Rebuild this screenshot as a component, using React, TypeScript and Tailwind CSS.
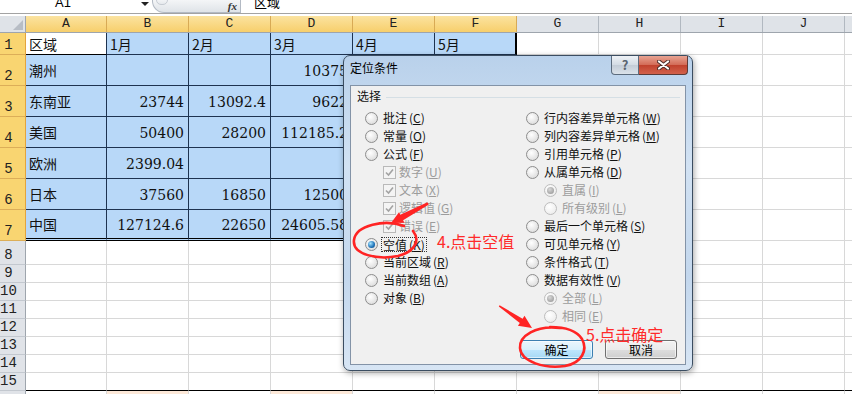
import React from "react";

const COLS = ["A", "B", "C", "D", "E", "F", "G", "H", "I", "J"];
const ROW_H = [22, 31, 31, 31, 31, 31, 31, 24, 18, 18, 18, 18, 18, 18, 18];

const DATA: string[][] = [
  ["区域", "1月", "2月", "3月", "4月", "5月"],
  ["潮州", "", "", "10375", "", ""],
  ["东南亚", "23744", "13092.4", "9622", "", ""],
  ["美国", "50400", "28200", "112185.2", "", ""],
  ["欧洲", "2399.04", "", "", "", ""],
  ["日本", "37560", "16850", "12500", "", ""],
  ["中国", "127124.6", "22650", "24605.58", "", ""],
];

const isNum = (v: string) => /^[0-9.]+$/.test(v);

const colW = (c: number) => (c === 0 ? "w-[81px]" : "w-[82px]");

function Cell({ r, c }: { r: number; c: number }) {
  const inTable = r < 7 && c < 6;
  const v = inTable ? DATA[r][c] : "";
  let cls = `${colW(c)} shrink-0 flex items-center overflow-hidden whitespace-nowrap `;
  if (inTable) {
    cls += r === 0 && c === 0 ? "bg-white " : "bg-[#b8d8f8] ";
    cls += c === 5 ? "border-r-2 border-r-black " : "border-r border-r-[#1e3350] ";
    cls +=
      r === 6
        ? "border-b-[3px] border-double border-b-black "
        : r === 0 && c === 0
          ? "border-b border-b-black "
          : "border-b border-b-[#1e3350] ";
  } else {
    cls += "bg-white border-r border-r-[#d8d8d8] ";
    cls += r === 14 ? "border-b border-b-black " : "border-b border-b-[#d8d8d8] ";
  }
  const num = isNum(v);
  return (
    <div className={cls + (num ? "justify-end pr-[4px] pt-[2px]" : "pl-[3px] pt-[1px]")}>
      {v && (
        <span
          className={
            num
              ? "font-['DejaVu_Serif',serif] text-[14px] text-[#111]"
              : "font-['Noto_Sans_CJK_SC',sans-serif] text-[14px] text-[#111]"
          }
        >
          {v}
        </span>
      )}
    </div>
  );
}

function RowHeader({ n, sel }: { n: string; sel: boolean }) {
  return (
    <div
      className={`w-[26px] shrink-0 flex items-end border-r ${
        sel
          ? "bg-[#f9d571] border-r-[#e3a43c] border-b border-b-[#dcae58]"
          : "bg-[#e0e3e8] border-r-[#9ea5ad] border-b border-b-[#c3c8cf]"
      }`}
    >
      <span className="w-[17px] text-center font-['Liberation_Mono',monospace] text-[14px] leading-[15px] text-[#222] pb-[1px]">
        {n}
      </span>
    </div>
  );
}

function Radio({ checked, disabled }: { checked?: boolean; disabled?: boolean }) {
  return (
    <span
      className={`inline-flex shrink-0 w-[13px] h-[13px] rounded-full border items-center justify-center ${
        disabled
          ? "border-[#bdbdbd] bg-[radial-gradient(circle_at_40%_35%,#ffffff,#e8e8e8)]"
          : "border-[#8d8d8d] bg-[radial-gradient(circle_at_40%_35%,#ffffff,#d4d4d4)]"
      }`}
    >
      {checked && (
        <span
          className={`w-[7px] h-[7px] rounded-full ${
            disabled
              ? "bg-[radial-gradient(circle_at_40%_35%,#d8d8d8,#8e8e8e)]"
              : "bg-[radial-gradient(circle_at_35%_35%,#a6e4ff,#1c72b8_60%,#0b3d73)]"
          }`}
        />
      )}
    </span>
  );
}

function Check() {
  return (
    <span className="inline-flex shrink-0 w-[13px] h-[13px] border border-[#b9b9b9] bg-[#f4f4f4] items-center justify-center">
      <svg width="9" height="9" viewBox="0 0 9 9">
        <path d="M1 4.5 L3.5 7 L8 1.5" stroke="#a3a3a3" strokeWidth="1.6" fill="none" />
      </svg>
    </span>
  );
}

function Label({ t, k, disabled }: { t: string; k: string; disabled?: boolean }) {
  return (
    <span className={disabled ? "text-[#9c9c9c]" : "text-[#111]"}>
      {t}
      <span className="ml-[2px]">
        (<span className="underline">{k}</span>)
      </span>
    </span>
  );
}

type Opt = {
  t: string;
  k: string;
  kind: "radio" | "check";
  indent?: boolean;
  checked?: boolean;
  disabled?: boolean;
  focus?: boolean;
};

const LEFT: Opt[] = [
  { t: "批注", k: "C", kind: "radio" },
  { t: "常量", k: "O", kind: "radio" },
  { t: "公式", k: "F", kind: "radio" },
  { t: "数字", k: "U", kind: "check", indent: true, disabled: true },
  { t: "文本", k: "X", kind: "check", indent: true, disabled: true },
  { t: "逻辑值", k: "G", kind: "check", indent: true, disabled: true },
  { t: "错误", k: "E", kind: "check", indent: true, disabled: true },
  { t: "空值", k: "K", kind: "radio", checked: true, focus: true },
  { t: "当前区域", k: "R", kind: "radio" },
  { t: "当前数组", k: "A", kind: "radio" },
  { t: "对象", k: "B", kind: "radio" },
];

const RIGHT: Opt[] = [
  { t: "行内容差异单元格", k: "W", kind: "radio" },
  { t: "列内容差异单元格", k: "M", kind: "radio" },
  { t: "引用单元格", k: "P", kind: "radio" },
  { t: "从属单元格", k: "D", kind: "radio" },
  { t: "直属", k: "I", kind: "radio", indent: true, checked: true, disabled: true },
  { t: "所有级别", k: "L", kind: "radio", indent: true, disabled: true },
  { t: "最后一个单元格", k: "S", kind: "radio" },
  { t: "可见单元格", k: "Y", kind: "radio" },
  { t: "条件格式", k: "T", kind: "radio" },
  { t: "数据有效性", k: "V", kind: "radio" },
  { t: "全部", k: "L", kind: "radio", indent: true, checked: true, disabled: true },
  { t: "相同", k: "E", kind: "radio", indent: true, disabled: true },
];

function OptRow({ o }: { o: Opt }) {
  return (
    <div className={`h-[18px] flex items-center ${o.indent ? "pl-[18px]" : ""}`}>
      {o.kind === "radio" ? <Radio checked={o.checked} disabled={o.disabled} /> : <Check />}
      {o.focus ? (
        <span className="ml-[3px] px-[1px] border border-dotted border-[#333] leading-[13px]">
          <Label t={o.t} k={o.k} disabled={o.disabled} />
        </span>
      ) : (
        <span className={o.kind === "check" ? "ml-[3px]" : "ml-[5px]"}>
          <Label t={o.t} k={o.k} disabled={o.disabled} />
        </span>
      )}
    </div>
  );
}

function Dialog() {
  return (
    <div className="absolute left-[343px] top-[55px] w-[350px] h-[316px] rounded-[7px] border border-[#3b4d61] bg-[linear-gradient(180deg,#b9d1eb_0%,#d2e2f3_35%,#c3d7ed_70%,#d7e5f4_100%)] shadow-[1px_2px_6px_rgba(0,0,0,0.35)] font-['Noto_Sans_CJK_SC',sans-serif] text-[12px]">
      <div className="h-[29px] flex items-start justify-between">
        <div className="pl-[6px] pt-[4px] leading-[16px] text-[12px] text-black">定位条件</div>
        <div className="flex mr-[4px]">
          <div className="w-[28px] h-[19px] rounded-bl-[4px] border border-t-0 border-[#5c6c7e] bg-[linear-gradient(180deg,#eef2f6,#d3dbe4_50%,#c3ccd7_51%,#dbe2ea)] flex items-center justify-center text-[13px] font-bold text-[#5a6470]">
            ?
          </div>
          <div className="w-[49px] h-[19px] rounded-br-[4px] border border-t-0 border-l-0 border-[#5c3a36] bg-[linear-gradient(180deg,#e8a392,#d26a56_50%,#c0412d_51%,#d2614b)] flex items-center justify-center">
            <svg width="13" height="10" viewBox="0 0 13 10">
              <path d="M2 1.5 L11 8.5 M11 1.5 L2 8.5" stroke="#4a2b28" strokeWidth="4" strokeLinecap="round" />
              <path d="M2 1.5 L11 8.5 M11 1.5 L2 8.5" stroke="#ffffff" strokeWidth="2.2" strokeLinecap="round" />
            </svg>
          </div>
        </div>
      </div>
      <div className="mx-[6px] h-[280px] border border-[#8393a7] bg-[#f0f0f0] flex flex-col">
        <div className="h-[23px] flex items-start pl-[6px]">
          <span className="pt-[2px] leading-[16px] text-[#111]">选择</span>
          <span className="flex-1 h-px bg-[#d5dfe5] mt-[11px] ml-[5px] mr-[5px]" />
        </div>
        <div className="flex">
          <div className="w-[175px] pl-[14px] flex flex-col">
            {LEFT.map((o) => (
              <OptRow key={o.t} o={o} />
            ))}
          </div>
          <div className="flex-1 flex flex-col">
            {RIGHT.map((o) => (
              <OptRow key={o.t} o={o} />
            ))}
          </div>
        </div>
        <div className="mt-[15px] flex justify-end gap-[12px] pr-[8px]">
          <div className="w-[73px] h-[19px] rounded-[3px] border border-[#3c7fb1] bg-[linear-gradient(180deg,#eaf6fd,#d9f0fc_50%,#bee6fd_51%,#a7d9f5)] flex items-center justify-center text-[12px] text-black shadow-[inset_0_0_0_1px_rgba(255,255,255,0.6)]">
            确定
          </div>
          <div className="w-[72px] h-[19px] rounded-[3px] border border-[#707070] bg-[linear-gradient(180deg,#f2f2f2,#ebebeb_50%,#dddddd_51%,#cfcfcf)] flex items-center justify-center text-[12px] text-black shadow-[inset_0_0_0_1px_rgba(255,255,255,0.6)]">
            取消
          </div>
        </div>
      </div>
    </div>
  );
}

function Annotations() {
  const red = "#ff2424";
  return (
    <>
      <svg className="absolute left-0 top-0 pointer-events-none" width="852" height="394" viewBox="0 0 852 394">
        <path
          d="M404 226 C385 219, 356 225, 354 240 C352 255, 378 260, 398 256 C414 252, 421 241, 413 231"
          stroke={red}
          strokeWidth="2.6"
          fill="none"
          strokeLinecap="round"
        />
        <polygon
          points="427.5,202.3 400.3,214.8 399,212.2 391,223 404.4,222.8 403.1,220.2 428.8,204.6"
          fill={red}
        />
        <path
          d="M560 328 C536 325, 519 336, 520 348 C521 362, 545 369, 565 366 C582 363, 588 350, 582 339 C577 331, 566 327, 550 327"
          stroke={red}
          strokeWidth="2.6"
          fill="none"
          strokeLinecap="round"
        />
        <polygon
          points="499.6,305.2 522.6,318.7 524.5,315.8 532,328 517.9,325.8 519.8,322.9 498.8,306.6"
          fill={red}
        />
      </svg>
      <div className="absolute left-[437px] top-[231px] text-[16px] leading-[20px] text-[#ff2a2a] font-['Noto_Sans_CJK_SC',sans-serif]">
        4.点击空值
      </div>
      <div className="absolute left-[586px] top-[324px] text-[16px] leading-[20px] text-[#ff2a2a] font-['Noto_Sans_CJK_SC',sans-serif]">
        5.点击确定
      </div>
    </>
  );
}

export default function App() {
  return (
    <div className="relative w-[852px] h-[394px] overflow-hidden bg-white">
      {/* formula bar */}
      <div className="h-[14px] flex border-b border-[#a3a3a3] overflow-hidden">
        <div className="w-[137px] pl-[55px] -mt-[4px] leading-[13px] text-[13px] font-['Liberation_Sans',sans-serif] text-black">
          A1
        </div>
        <div className="w-[15px] flex justify-center pt-[2px]">
          <span className="w-0 h-0 border-l-[4px] border-r-[4px] border-t-[4px] border-l-transparent border-r-transparent border-t-[#222]" />
        </div>
        <div className="relative w-[89px] rounded-bl-[12px] border-l border-b border-r border-[#b3bac4] bg-[linear-gradient(180deg,#f4f5f7,#dfe3e8)] flex justify-end items-start pr-[3px]">
          <span className="absolute left-[3px] -top-[5px] w-[12px] h-[10px] rounded-full border border-[#c7ccd3] bg-[linear-gradient(180deg,#ffffff,#e6e9ed)]" />
          <span className="-mt-[2px] text-[11px] italic font-bold font-['Liberation_Serif',serif] text-[#333]">fx</span>
        </div>
        <div className="flex-1 pl-[13px] -mt-[5px] leading-[13px] text-[13px] font-['Noto_Sans_CJK_SC',sans-serif] text-black">
          区域
        </div>
      </div>
      <div className="h-[2px]" />
      {/* column header */}
      <div className="h-[17px] flex border-b border-b-[#9ea5ad]">
        <div className="relative w-[26px] shrink-0 bg-[#dfe3e8] border-r border-[#9ea5ad]">
          <svg className="absolute right-[2px] bottom-[2px]" width="10" height="10" viewBox="0 0 10 10">
            <polygon points="10,0 10,10 0,10" fill="#b7bdc5" />
          </svg>
        </div>
        {COLS.map((c, i) => (
          <div
            key={c}
            className={`${colW(i)} shrink-0 flex items-center justify-center border-r font-['Liberation_Mono',monospace] text-[13px] text-[#222] ${
              i < 6
                ? "bg-[linear-gradient(180deg,#fbe3a0,#f7cf6c)] border-r-[#d8aa55]"
                : "bg-[#dfe3e8] border-r-[#b1b8c0]"
            }`}
          >
            {c}
          </div>
        ))}
        <div className="flex-1 bg-[#dfe3e8]" />
      </div>
      {/* rows */}
      {ROW_H.map((h, r) => (
        <div key={r} className="flex" style={{ height: h }}>
          <RowHeader n={String(r + 1)} sel={r < 7} />
          {COLS.map((c, ci) => (
            <Cell key={c} r={r} c={ci} />
          ))}
          <div className={`flex-1 border-b ${r === 14 ? "border-b-black" : "border-b-[#d8d8d8]"}`} />
        </div>
      ))}
      <div className="flex h-[3px]">
        <div className="w-[26px] shrink-0 bg-[#e0e3e8] border-r border-[#9ea5ad]" />
        {COLS.map((c, ci) => (
          <div
            key={c}
            className={`${colW(ci)} shrink-0 border-r border-[#d8d8d8] ${
              ci === 1 || ci === 3 || ci === 7 ? "bg-[#fde9d9]" : "bg-white"
            }`}
          />
        ))}
      </div>
      <Dialog />
      <Annotations />
    </div>
  );
}
